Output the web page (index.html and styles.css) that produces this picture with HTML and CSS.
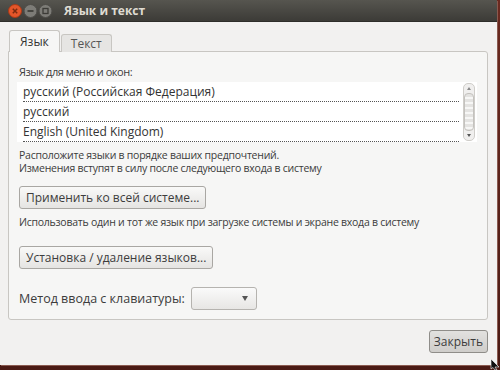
FILE: index.html
```html
<!DOCTYPE html>
<html lang="ru">
<head>
<meta charset="UTF-8">
<title>Язык и текст</title>
<link rel="stylesheet" href="styles.css">
</head>
<body>
<div class="window">
    <div class="titlebar">
        <div class="wm-buttons">
            <svg width="50" height="18" viewBox="0 0 50 18">
                <circle cx="9" cy="9" r="6.5" fill="#e4562a" stroke="#a83a18"/>
                <path d="M6.8 6.8 L11.2 11.2 M11.2 6.8 L6.8 11.2" stroke="#7a2a10" stroke-width="1.5"/>
                <circle cx="24.5" cy="9" r="6.5" fill="#7d7c77" stroke="#4d4c48"/>
                <path d="M21.5 9 H27.5" stroke="#3c3b37" stroke-width="1.7"/>
                <circle cx="39.5" cy="9" r="6.5" fill="#7d7c77" stroke="#4d4c48"/>
                <rect x="37" y="6.5" width="5" height="5" fill="none" stroke="#3c3b37" stroke-width="1.3"/>
            </svg>
        </div>
        <span class="title">Язык и текст</span>
    </div>
    <div class="content">
        <div class="tabs">
            <div class="tab active">Язык</div>
            <div class="tab">Текст</div>
        </div>
        <div class="panel">
            <div class="label">Язык для меню и окон:</div>
            <div class="list">
                <div class="rows">
                    <div class="row">русский (Российская Федерация)</div>
                    <div class="row">русский</div>
                    <div class="row">English (United Kingdom)</div>
                </div>
                <div class="scrollbar">
                    <span class="arrow up"></span>
                    <span class="thumb"></span>
                    <span class="arrow down"></span>
                </div>
            </div>
            <p class="hint">Расположите языки в порядке ваших предпочтений.<br>Изменения вступят в силу после следующего входа в систему</p>
            <button class="btn">Применить ко всей системе...</button>
            <p class="hint one">Использовать один и тот же язык при загрузке системы и экране входа в систему</p>
            <button class="btn install">Установка / удаление языков...</button>
            <div class="input-row">
                <span>Метод ввода с клавиатуры:</span>
                <div class="combo"><span class="caret"></span></div>
            </div>
        </div>
        <div class="actions">
            <button class="btn close">Закрыть</button>
        </div>
    </div>
</div>
<svg class="cursor" width="10" height="12" viewBox="0 0 10 12">
    <path d="M1 1 L9 9 L5 9 L7 12 L5 12 L3 9.5 L1 11 Z" fill="#111" stroke="#fff" stroke-width="0.6"/>
</svg>
</body>
</html>
```

FILE: styles.css
```css
body {
    margin: 0;
    width: 500px;
    height: 370px;
    overflow: hidden;
    background: linear-gradient(#6b2a20, #4a1a14);
    font-family: "Open Sans", "DejaVu Sans", sans-serif;
    font-size: 12px;
    color: #3c3c3c;
    position: relative;
}

.window {
    width: 497px;
    height: 365px;
    background: #f2f1f0;
    display: flex;
    flex-direction: column;
    box-shadow: 1px 1px 0 #8a5a50;
}

.titlebar {
    height: 22px;
    background: linear-gradient(#56554f, #3c3b37);
    border-bottom: 1px solid #2e2d2a;
    display: flex;
    align-items: center;
    box-sizing: border-box;
}

.wm-buttons {
    padding-left: 6px;
    display: flex;
}

.title {
    margin-left: 8px;
    color: #dfdbd2;
    font-weight: bold;
    font-size: 12px;
}

.content {
    flex: 1;
    padding: 9px 8px 0 8px;
    display: flex;
    flex-direction: column;
}

.tabs {
    display: flex;
    align-items: flex-end;
    height: 21px;
    margin-left: 1px;
    position: relative;
    z-index: 1;
}

.tab {
    padding: 0 9px;
    height: 17px;
    line-height: 17px;
    background: #e6e5e3;
    border: 1px solid #c8c6c2;
    border-bottom: none;
    border-radius: 3px 3px 0 0;
    color: #555;
}

.tab.active {
    height: 21px;
    line-height: 22px;
    padding: 0 10px;
    background: #f6f6f5;
    color: #333;
    margin-right: 1px;
}

.panel {
    width: 480px;
    height: 269px;
    box-sizing: border-box;
    border: 1px solid #c8c6c2;
    border-radius: 0 3px 3px 3px;
    background: #f6f6f5;
    padding: 13px 9px 0 10px;
    margin-top: -1px;
}

.label {
    line-height: 14px;
    font-size: 11px;
    letter-spacing: -0.45px;
}

.list {
    margin-top: 3px;
    width: 460px;
    height: 60px;
    background: #fff;
    display: flex;
    margin-left: -2px;
}

.rows {
    flex: 1;
    padding-left: 6px;
}

.row {
    height: 19px;
    line-height: 19px;
    border-bottom: 1px dotted #555;
    color: #333;
}

.scrollbar {
    width: 10px;
    margin: 1px 2px 1px 4px;
    border: 1px solid #cfcdc9;
    border-radius: 5px;
    background: #f0efee;
    display: flex;
    flex-direction: column;
    align-items: center;
}

.arrow {
    width: 0;
    height: 0;
    border-left: 2px solid transparent;
    border-right: 2px solid transparent;
    margin: 3px 0;
}

.arrow.up {
    border-bottom: 3px solid #888;
}

.arrow.down {
    border-top: 3px solid #555;
}

.thumb {
    flex: 1;
    width: 8px;
    border: 1px solid #c4c2be;
    border-radius: 4px;
    background: repeating-linear-gradient(#e4e3e1 0 3px, #f7f7f6 3px 5px);
}

.hint {
    margin: 7px 0 0 0;
    font-size: 10.5px;
    letter-spacing: -0.25px;
    line-height: 13px;
    color: #3c3c3c;
}

.hint.one {
    margin-top: 7px;
}

.btn {
    font-family: inherit;
    font-size: 12px;
    color: #3c3c3c;
    height: 23px;
    padding: 0 6px;
    border: 1px solid #a9a7a3;
    border-radius: 3px;
    background: linear-gradient(#f9f9f8, #e5e4e2);
    display: block;
}

.panel .btn {
    margin-top: 11px;
}

.panel .btn.install {
    margin-top: 17px;
}

.input-row {
    margin-top: 18px;
    display: flex;
    align-items: center;
    gap: 6px;
    font-size: 12.5px;
}

.combo {
    width: 64px;
    height: 21px;
    border: 1px solid #b5b3af;
    border-radius: 3px;
    background: linear-gradient(#fafafa, #e7e6e4);
    display: flex;
    align-items: center;
    justify-content: flex-end;
}

.caret {
    border-left: 3px solid transparent;
    border-right: 3px solid transparent;
    border-top: 5px solid #555;
    margin-right: 8px;
}

.actions {
    display: flex;
    justify-content: flex-end;
    padding-top: 10px;
    padding-right: 1px;
}

.btn.close {
    height: 23px;
    padding: 0 4px;
    background: linear-gradient(#e2e1df, #cfcdca);
    border-color: #8f8d89;
}

.cursor {
    position: absolute;
    left: 490px;
    top: 358px;
}
```
